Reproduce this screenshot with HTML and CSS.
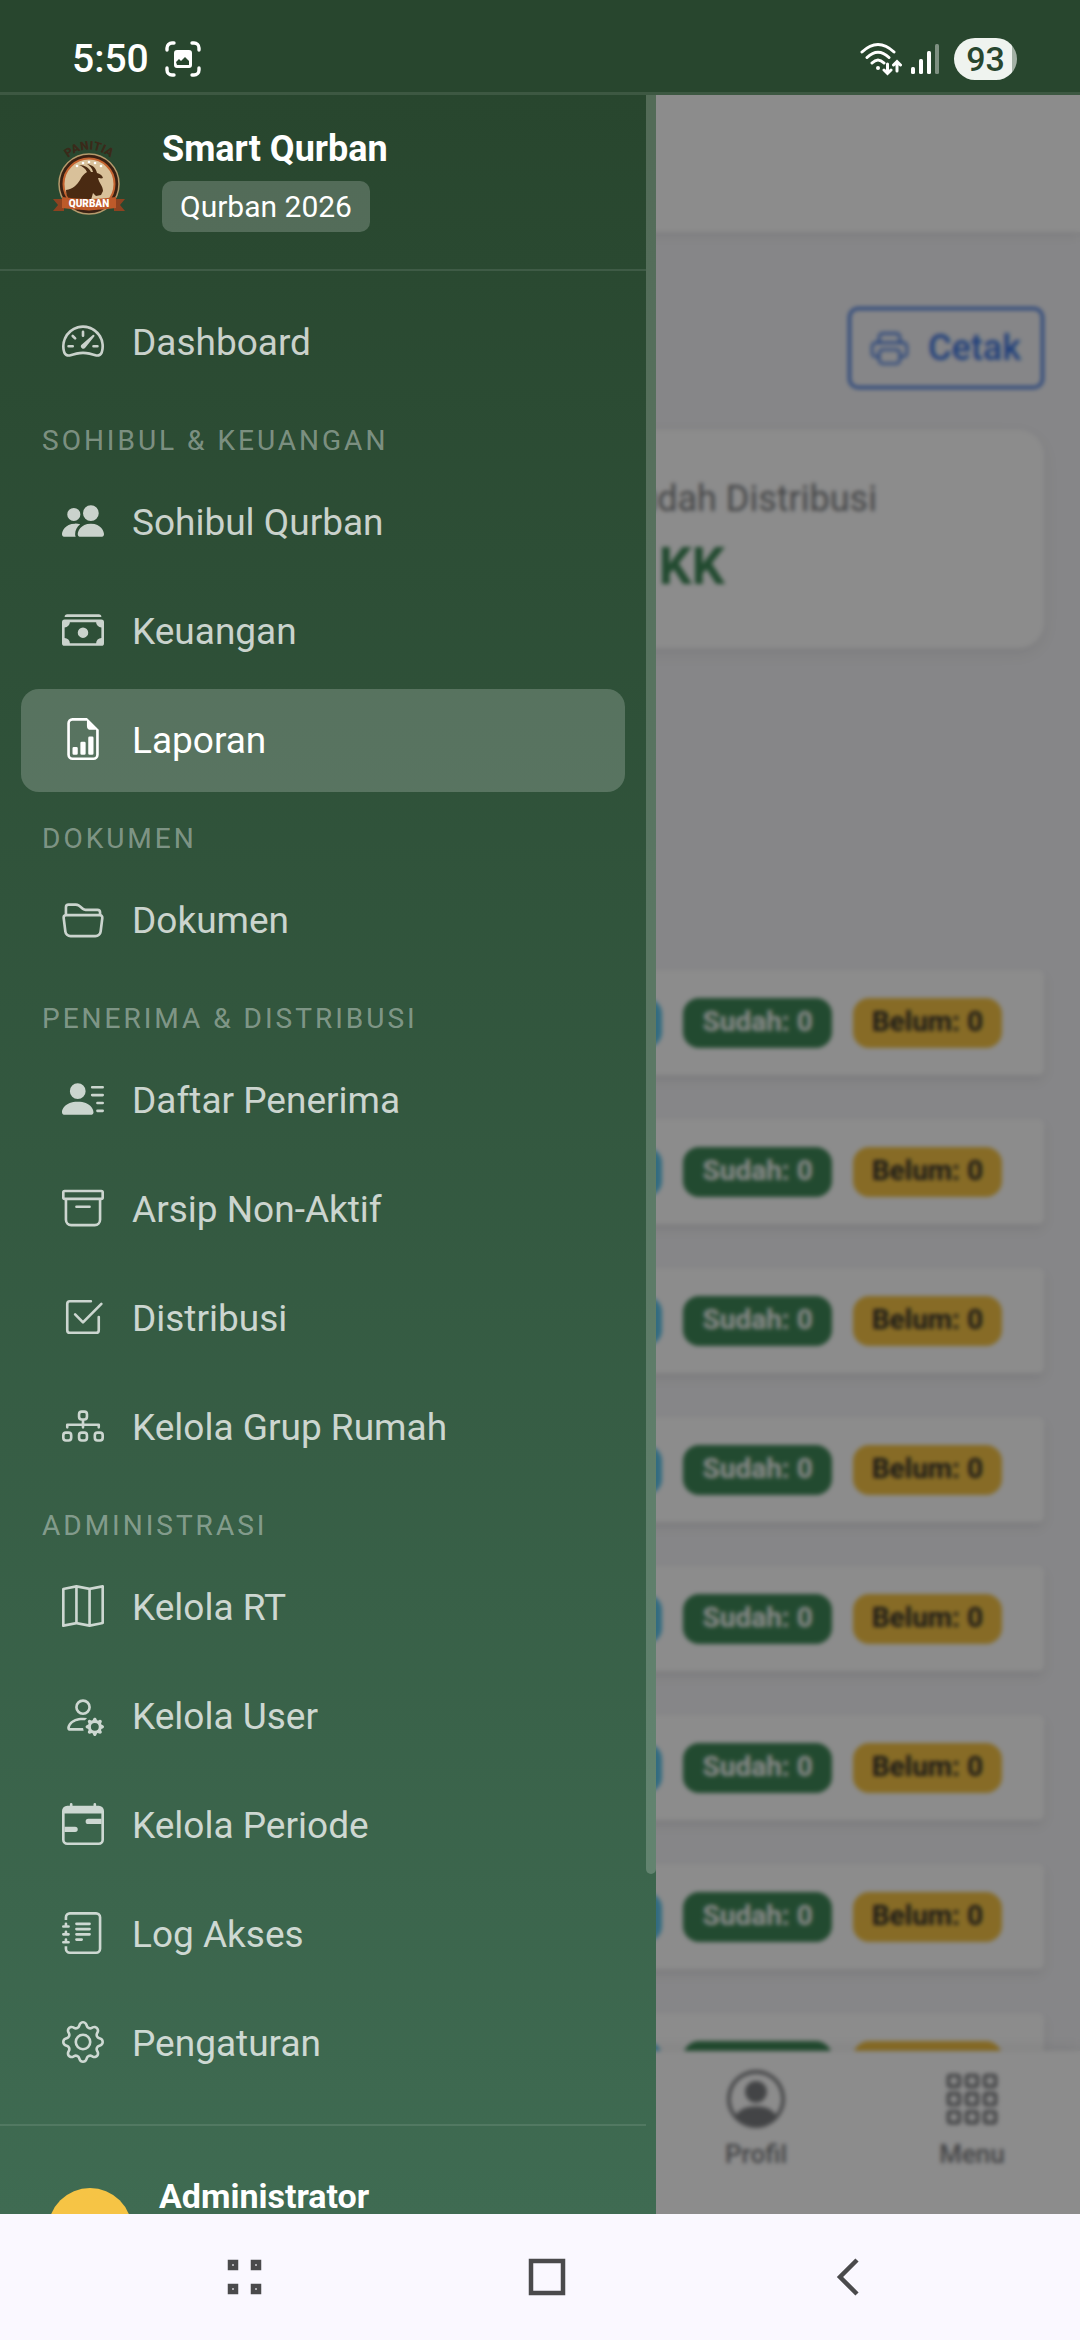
FILE: index.html
```html
<!DOCTYPE html>
<html lang="id">
<head>
    <meta charset="UTF-8">
    <meta name="viewport" content="width=device-width, initial-scale=1.0">
    <title>Smart Qurban - Laporan</title>
    <link rel="stylesheet" href="styles.css">
</head>
<body>
    <div class="status-bar">
        <div class="status-left">
            <span class="clock">5:50</span>
            <svg class="capture-icon" viewBox="0 0 36 36" fill="none" stroke="currentColor" stroke-width="3.4" stroke-linecap="round">
                <path d="M2 9V7a5 5 0 0 1 5-5h2M27 2h2a5 5 0 0 1 5 5v2M34 27v2a5 5 0 0 1-5 5h-2M9 34H7a5 5 0 0 1-5-5v-2"/>
                <path fill="currentColor" stroke="none" fill-rule="evenodd" d="M12 9h12a3 3 0 0 1 3 3v12a3 3 0 0 1-3 3H12a3 3 0 0 1-3-3V12a3 3 0 0 1 3-3zm0 15h12v-4l-4-4-4 4-2-2-3 3z"/>
            </svg>
        </div>
        <div class="status-right">
            <svg class="wifi-icon" viewBox="0 0 42 34" fill="none" stroke="currentColor" stroke-width="3" stroke-linecap="round">
                <path d="M2 10Q18-5 34 10M7 15.500Q18 5 29 15.500M12 21q6-6 12 0"/>
                <circle cx="18" cy="26" r="2" fill="currentColor" stroke="none"/>
                <path d="M27.500 22v9M24 28l3.500 3.500L31 28M37 29v-9M33.500 23l3.500-3.500 3.500 3.500"/>
            </svg>
            <svg class="signal-icon" viewBox="0 0 28 30" fill="currentColor">
                <rect x="0" y="23" width="4" height="7" rx="1.500"/>
                <rect x="8" y="15" width="4" height="15" rx="1.500"/>
                <rect x="16" y="7" width="4" height="23" rx="1.500"/>
                <rect x="24" y="0" width="4" height="30" rx="1.500" opacity=".4"/>
            </svg>
            <span class="battery">93</span>
        </div>
    </div>

    <div class="app">
        <div class="page">
            <header class="topbar"></header>
            <main class="content">
                <div class="toolbar">
                    <button class="btn-print" type="button">
                        <svg viewBox="0 0 16 16" fill="currentColor"><path d="M5 1a2 2 0 0 0-2 2v2H2a2 2 0 0 0-2 2v3a2 2 0 0 0 2 2h1v1a2 2 0 0 0 2 2h6a2 2 0 0 0 2-2v-1h1a2 2 0 0 0 2-2V7a2 2 0 0 0-2-2h-1V3a2 2 0 0 0-2-2zM4 3a1 1 0 0 1 1-1h6a1 1 0 0 1 1 1v2H4zm1 5a2 2 0 0 0-2 2v1H2a1 1 0 0 1-1-1V7a1 1 0 0 1 1-1h12a1 1 0 0 1 1 1v3a1 1 0 0 1-1 1h-1v-1a2 2 0 0 0-2-2zm7 2v3a1 1 0 0 1-1 1H5a1 1 0 0 1-1-1v-3a1 1 0 0 1 1-1h6a1 1 0 0 1 1 1"/></svg>
                        Cetak
                    </button>
                </div>
                <div class="stats">
                    <div class="stat-card">
                        <p class="stat-label">Sudah Distribusi</p>
                        <p class="stat-value">0 KK</p>
                    </div>
                </div>
                <div class="rt-list">
                    <div class="rt-row"><span class="badge badge-info"></span><span class="badge badge-success">Sudah: 0</span><span class="badge badge-warning">Belum: 0</span></div>
                    <div class="rt-row"><span class="badge badge-info"></span><span class="badge badge-success">Sudah: 0</span><span class="badge badge-warning">Belum: 0</span></div>
                    <div class="rt-row"><span class="badge badge-info"></span><span class="badge badge-success">Sudah: 0</span><span class="badge badge-warning">Belum: 0</span></div>
                    <div class="rt-row"><span class="badge badge-info"></span><span class="badge badge-success">Sudah: 0</span><span class="badge badge-warning">Belum: 0</span></div>
                    <div class="rt-row"><span class="badge badge-info"></span><span class="badge badge-success">Sudah: 0</span><span class="badge badge-warning">Belum: 0</span></div>
                    <div class="rt-row"><span class="badge badge-info"></span><span class="badge badge-success">Sudah: 0</span><span class="badge badge-warning">Belum: 0</span></div>
                    <div class="rt-row"><span class="badge badge-info"></span><span class="badge badge-success">Sudah: 0</span><span class="badge badge-warning">Belum: 0</span></div>
                    <div class="rt-row"><span class="badge badge-info"></span><span class="badge badge-success">Sudah: 0</span><span class="badge badge-warning">Belum: 0</span></div>
                </div>
            </main>
            <nav class="tabbar">
                <a class="tab tab-profile" href="#profil">
                    <svg viewBox="0 0 16 16" fill="currentColor"><path d="M11 6a3 3 0 1 1-6 0 3 3 0 0 1 6 0"/><path fill-rule="evenodd" d="M0 8a8 8 0 1 1 16 0A8 8 0 0 1 0 8m8-7a7 7 0 0 0-5.468 11.370C3.242 11.226 4.805 10 8 10s4.757 1.225 5.468 2.370A7 7 0 0 0 8 1"/></svg>
                    Profil
                </a>
                <a class="tab" href="#menu">
                    <svg viewBox="0 0 16 16" fill="none" stroke="currentColor">
                        <rect x="1.500" y="1.500" width="3" height="3" rx=".5"/><rect x="6.500" y="1.500" width="3" height="3" rx=".5"/><rect x="11.500" y="1.500" width="3" height="3" rx=".5"/>
                        <rect x="1.500" y="6.500" width="3" height="3" rx=".5"/><rect x="6.500" y="6.500" width="3" height="3" rx=".5"/><rect x="11.500" y="6.500" width="3" height="3" rx=".5"/>
                        <rect x="1.500" y="11.500" width="3" height="3" rx=".5"/><rect x="6.500" y="11.500" width="3" height="3" rx=".5"/><rect x="11.500" y="11.500" width="3" height="3" rx=".5"/>
                    </svg>
                    Menu
                </a>
            </nav>
        </div>

        <div class="overlay"></div>

        <aside class="sidebar">
            <div class="sidebar-body">
                <div class="brand">
                    <svg class="logo" viewBox="0 0 84 84">
                        <defs><path id="logo-arc" d="M17 23Q42 0 67 23"/></defs>
                        <text class="logo-top"><textPath href="#logo-arc" startOffset="50%">PANITIA</textPath></text>
                        <circle cx="42" cy="46" r="30" fill="#3a2113" stroke="#b59a6c" stroke-width="1.500"/>
                        <circle cx="42" cy="46" r="25.500" fill="#d9c19a" stroke="#c4632f" stroke-width="2"/>
                        <g fill="#fff"><circle cx="30" cy="28" r="1.300"/><circle cx="36" cy="25" r="1.300"/><circle cx="42" cy="24" r="1.300"/><circle cx="48" cy="25" r="1.300"/><circle cx="54" cy="28" r="1.300"/></g>
                        <path fill="#4a2a12" d="M19 52c7-1 11-5 14-10 2-4 4-6 7-8-2-4-5-6-8-7 6 0 10 3 12 7h2c-1-4-3-6-6-8 6 1 9 4 10 9 3 1 5 2 6 5-2 1-4 0-5 0 1 5 5 8 5 13l-2 4-5 1-3-3-2 7H23c-3-3-4-6-4-10z"/>
                        <path fill="#8e4220" d="M6 61h11v12H6l5-6zM78 61H67v12h11l-5-6z"/>
                        <path fill="#bd5a2a" d="M15 59q27 4 54 0v11q-27 4-54 0z"/>
                        <text class="logo-banner" x="42" y="69">QURBAN</text>
                    </svg>
                    <div class="brand-text">
                        <div class="brand-name">Smart Qurban</div>
                        <div class="brand-period">Qurban 2026</div>
                    </div>
                </div>

                <nav class="menu">
                    <a class="menu-item" href="#dashboard">
                        <svg viewBox="0 0 16 16"><path d="M8 4a.5.5 0 0 1 .5.5V6a.5.5 0 0 1-1 0V4.500A.5.5 0 0 1 8 4M3.732 5.732a.5.5 0 0 1 .707 0l.915.914a.5.5 0 1 1-.708.708l-.914-.915a.5.5 0 0 1 0-.707M2 10a.5.5 0 0 1 .5-.5h1.586a.5.5 0 0 1 0 1H2.500A.5.5 0 0 1 2 10m9.500 0a.5.5 0 0 1 .5-.5h1.500a.5.5 0 0 1 0 1H12a.5.5 0 0 1-.5-.5m.754-4.246a.39.39 0 0 0-.527-.02L7.547 9.310a.91.91 0 1 0 1.302 1.258l3.434-4.297a.39.39 0 0 0-.029-.518z"/><path fill-rule="evenodd" d="M0 10a8 8 0 1 1 15.547 2.661c-.442 1.253-1.845 1.602-2.932 1.250C11.309 13.488 9.475 13 8 13c-1.474 0-3.310.488-4.615.911-1.087.352-2.490.003-2.932-1.250A8 8 0 0 1 0 10m8-7a7 7 0 0 0-6.603 9.329c.203.575.923.876 1.680.63C4.397 12.533 6.358 12 8 12s3.604.532 4.923.96c.757.245 1.477-.056 1.680-.631A7 7 0 0 0 8 3"/></svg>
                        Dashboard
                    </a>

                    <h2 class="menu-heading">SOHIBUL &amp; KEUANGAN</h2>
                    <a class="menu-item" href="#sohibul">
                        <svg viewBox="0 0 16 16"><path d="M7 14s-1 0-1-1 1-4 5-4 5 3 5 4-1 1-1 1zm4-6a3 3 0 1 0 0-6 3 3 0 0 0 0 6m-5.784 6A2.240 2.240 0 0 1 5 13c0-1.355.68-2.750 1.936-3.720A6.300 6.300 0 0 0 5 9c-4 0-5 3-5 4s1 1 1 1zM4.500 8a2.500 2.500 0 1 0 0-5 2.500 2.500 0 0 0 0 5"/></svg>
                        Sohibul Qurban
                    </a>
                    <a class="menu-item" href="#keuangan">
                        <svg viewBox="0 0 16 16"><path d="M1 3a1 1 0 0 1 1-1h12a1 1 0 0 1 1 1zm7 8a2 2 0 1 0 0-4 2 2 0 0 0 0 4"/><path d="M0 5a1 1 0 0 1 1-1h14a1 1 0 0 1 1 1v8a1 1 0 0 1-1 1H1a1 1 0 0 1-1-1zm3 0a2 2 0 0 1-2 2v4a2 2 0 0 1 2 2h10a2 2 0 0 1 2-2V7a2 2 0 0 1-2-2z"/></svg>
                        Keuangan
                    </a>
                    <a class="menu-item active" href="#laporan">
                        <svg viewBox="0 0 16 16"><path d="M10 13.500a.5.5 0 0 0 .5.5h1a.5.5 0 0 0 .5-.5v-6a.5.5 0 0 0-.5-.5h-1a.5.5 0 0 0-.5.5zm-2.500.5a.5.5 0 0 1-.5-.5v-4a.5.5 0 0 1 .5-.5h1a.5.5 0 0 1 .5.5v4a.5.5 0 0 1-.5.5zm-3 0a.5.5 0 0 1-.5-.5v-2a.5.5 0 0 1 .5-.5h1a.5.5 0 0 1 .5.5v2a.5.5 0 0 1-.5.5z"/><path d="M14 14V4.500L9.500 0H4a2 2 0 0 0-2 2v12a2 2 0 0 0 2 2h8a2 2 0 0 0 2-2M9.500 3A1.500 1.500 0 0 0 11 4.500h2V14a1 1 0 0 1-1 1H4a1 1 0 0 1-1-1V2a1 1 0 0 1 1-1h5.500z"/></svg>
                        Laporan
                    </a>

                    <h2 class="menu-heading">DOKUMEN</h2>
                    <a class="menu-item" href="#dokumen">
                        <svg viewBox="0 0 16 16"><path d="M1 3.500A1.500 1.500 0 0 1 2.500 2h2.764c.958 0 1.760.56 2.311 1.184C7.985 3.648 8.480 4 9 4h4.500A1.500 1.500 0 0 1 15 5.500v.64c.57.265.94.876.856 1.546l-.64 5.124A2.500 2.500 0 0 1 12.733 15H3.266a2.500 2.500 0 0 1-2.481-2.190l-.64-5.124A1.500 1.500 0 0 1 1 6.140zM2 6h12v-.5a.5.5 0 0 0-.5-.5H9c-.964 0-1.710-.629-2.174-1.154C6.374 3.334 5.820 3 5.264 3H2.500a.5.5 0 0 0-.5.5zm-.367 1a.5.5 0 0 0-.496.562l.64 5.124A1.500 1.500 0 0 0 3.266 14h9.468a1.500 1.500 0 0 0 1.489-1.314l.64-5.124A.5.5 0 0 0 14.367 7z"/></svg>
                        Dokumen
                    </a>

                    <h2 class="menu-heading">PENERIMA &amp; DISTRIBUSI</h2>
                    <a class="menu-item" href="#penerima">
                        <svg viewBox="0 0 16 16"><path d="M6 8a3 3 0 1 0 0-6 3 3 0 0 0 0 6m-5 6s-1 0-1-1 1-4 6-4 6 3 6 4-1 1-1 1zM11 3.500a.5.5 0 0 1 .5-.5h4a.5.5 0 0 1 0 1h-4a.5.5 0 0 1-.5-.5m.5 2.500a.5.5 0 0 0 0 1h4a.5.5 0 0 0 0-1zm2 3a.5.5 0 0 0 0 1h2a.5.5 0 0 0 0-1zm0 3a.5.5 0 0 0 0 1h2a.5.5 0 0 0 0-1z"/></svg>
                        Daftar Penerima
                    </a>
                    <a class="menu-item" href="#arsip">
                        <svg viewBox="0 0 16 16"><path d="M0 2a1 1 0 0 1 1-1h14a1 1 0 0 1 1 1v2a1 1 0 0 1-1 1v7.500a2.500 2.500 0 0 1-2.500 2.500h-9A2.500 2.500 0 0 1 1 12.500V5a1 1 0 0 1-1-1zm2 3v7.500A1.500 1.500 0 0 0 3.500 14h9a1.500 1.500 0 0 0 1.500-1.500V5zm13-3H1v2h14zM5 7.500a.5.5 0 0 1 .5-.5h5a.5.5 0 0 1 0 1h-5a.5.5 0 0 1-.5-.5"/></svg>
                        Arsip Non-Aktif
                    </a>
                    <a class="menu-item" href="#distribusi">
                        <svg viewBox="0 0 16 16"><path d="M3 14.500A1.500 1.500 0 0 1 1.500 13V3A1.500 1.500 0 0 1 3 1.500h8a.5.5 0 0 1 0 1H3a.5.5 0 0 0-.5.5v10a.5.5 0 0 0 .5.5h10a.5.5 0 0 0 .5-.5V8a.5.5 0 0 1 1 0v5a1.500 1.500 0 0 1-1.500 1.500z"/><path d="m8.354 10.354 7-7a.5.5 0 0 0-.708-.708L8 9.293 5.354 6.646a.5.5 0 1 0-.708.708l3 3a.5.5 0 0 0 .708 0"/></svg>
                        Distribusi
                    </a>
                    <a class="menu-item" href="#grup-rumah">
                        <svg viewBox="0 0 16 16"><path fill-rule="evenodd" d="M6 3.500A1.500 1.500 0 0 1 7.500 2h1A1.500 1.500 0 0 1 10 3.500v1A1.500 1.500 0 0 1 8.500 6v1H14a.5.5 0 0 1 .5.5v1a.5.5 0 0 1-1 0V8h-5v.5a.5.5 0 0 1-1 0V8h-5v.5a.5.5 0 0 1-1 0v-1A.5.5 0 0 1 2 7h5.500V6A1.500 1.500 0 0 1 6 4.500zM8.500 5a.5.5 0 0 0 .5-.5v-1a.5.5 0 0 0-.5-.5h-1a.5.5 0 0 0-.5.5v1a.5.5 0 0 0 .5.5zM0 11.500A1.500 1.500 0 0 1 1.500 10h1A1.500 1.500 0 0 1 4 11.500v1A1.500 1.500 0 0 1 2.500 14h-1A1.500 1.500 0 0 1 0 12.500zm1.500-.5a.5.5 0 0 0-.5.5v1a.5.5 0 0 0 .5.5h1a.5.5 0 0 0 .5-.5v-1a.5.5 0 0 0-.5-.5zm4.500.5A1.500 1.500 0 0 1 7.500 10h1a1.500 1.500 0 0 1 1.500 1.500v1A1.500 1.500 0 0 1 8.500 14h-1A1.500 1.500 0 0 1 6 12.500zm1.500-.5a.5.5 0 0 0-.5.5v1a.5.5 0 0 0 .5.5h1a.5.5 0 0 0 .5-.5v-1a.5.5 0 0 0-.5-.5zm4.500.5a1.500 1.500 0 0 1 1.500-1.500h1a1.500 1.500 0 0 1 1.500 1.500v1a1.500 1.500 0 0 1-1.500 1.500h-1a1.500 1.500 0 0 1-1.500-1.500zm1.500-.5a.5.5 0 0 0-.5.5v1a.5.5 0 0 0 .5.5h1a.5.5 0 0 0 .5-.5v-1a.5.5 0 0 0-.5-.5z"/></svg>
                        Kelola Grup Rumah
                    </a>

                    <h2 class="menu-heading">ADMINISTRASI</h2>
                    <a class="menu-item" href="#rt">
                        <svg viewBox="0 0 16 16"><path fill-rule="evenodd" d="M15.817.113A.5.5 0 0 1 16 .5v14a.5.5 0 0 1-.402.49l-5 1a.5.5 0 0 1-.196 0L5.500 15.010l-4.902.98A.5.5 0 0 1 0 15.500v-14a.5.5 0 0 1 .402-.49l5-1a.5.5 0 0 1 .196 0L10.500.99l4.902-.98a.5.5 0 0 1 .415.103M10 1.910l-4-.8v12.980l4 .8zm1 12.980 4-.8V1.110l-4 .8zm-6-.8V1.110l-4 .8v12.980z"/></svg>
                        Kelola RT
                    </a>
                    <a class="menu-item" href="#user">
                        <svg viewBox="0 0 16 16"><path d="M11 5a3 3 0 1 1-6 0 3 3 0 0 1 6 0M8 7a2 2 0 1 0 0-4 2 2 0 0 0 0 4m.256 7a4.500 4.500 0 0 1-.229-1.004H3c.001-.246.154-.986.832-1.664C4.484 10.680 5.711 10 8 10q.39 0 .74.025c.226-.341.496-.65.804-.918Q8.844 9.002 8 9c-5 0-6 3-6 4s1 1 1 1zm3.630-4.540c.18-.613 1.048-.613 1.229 0l.043.148a.64.64 0 0 0 .921.382l.136-.074c.561-.306 1.175.308.87.869l-.075.136a.64.64 0 0 0 .382.92l.149.045c.612.18.612 1.048 0 1.229l-.15.043a.64.64 0 0 0-.38.921l.074.136c.305.561-.309 1.175-.87.87l-.136-.075a.64.64 0 0 0-.92.382l-.045.149c-.18.612-1.048.612-1.229 0l-.043-.15a.64.64 0 0 0-.921-.38l-.136.074c-.561.305-1.175-.309-.87-.87l.075-.136a.64.64 0 0 0-.382-.92l-.148-.045c-.613-.18-.613-1.048 0-1.229l.148-.043a.64.64 0 0 0 .382-.921l-.074-.136c-.306-.561.308-1.175.869-.87l.136.075a.64.64 0 0 0 .92-.382zM14 12.500a1.500 1.500 0 1 0-3 0 1.500 1.500 0 0 0 3 0"/></svg>
                        Kelola User
                    </a>
                    <a class="menu-item" href="#periode">
                        <svg viewBox="0 0 16 16"><path d="M9 7a1 1 0 0 1 1-1h5v2h-5a1 1 0 0 1-1-1M1 9h4a1 1 0 0 1 0 2H1z"/><path d="M3.500 0a.5.5 0 0 1 .5.5V1h8V.5a.5.5 0 0 1 1 0V1h1a2 2 0 0 1 2 2v11a2 2 0 0 1-2 2H2a2 2 0 0 1-2-2V3a2 2 0 0 1 2-2h1V.5a.5.5 0 0 1 .5-.5M1 4v10a1 1 0 0 0 1 1h12a1 1 0 0 0 1-1V4z"/></svg>
                        Kelola Periode
                    </a>
                    <a class="menu-item" href="#log">
                        <svg viewBox="0 0 16 16"><path d="M5 10.500a.5.5 0 0 1 .5-.5h2a.5.5 0 0 1 0 1h-2a.5.5 0 0 1-.5-.5m0-2a.5.5 0 0 1 .5-.5h5a.5.5 0 0 1 0 1h-5a.5.5 0 0 1-.5-.5m0-2a.5.5 0 0 1 .5-.5h5a.5.5 0 0 1 0 1h-5a.5.5 0 0 1-.5-.5m0-2a.5.5 0 0 1 .5-.5h5a.5.5 0 0 1 0 1h-5a.5.5 0 0 1-.5-.5"/><path d="M3 0h10a2 2 0 0 1 2 2v12a2 2 0 0 1-2 2H3a2 2 0 0 1-2-2v-1h1v1a1 1 0 0 0 1 1h10a1 1 0 0 0 1-1V2a1 1 0 0 0-1-1H3a1 1 0 0 0-1 1v1H1V2a2 2 0 0 1 2-2"/><path d="M1 5v-.5a.5.5 0 0 1 1 0V5h.5a.5.5 0 0 1 0 1h-2a.5.5 0 0 1 0-1zm0 3v-.5a.5.5 0 0 1 1 0V8h.5a.5.5 0 0 1 0 1h-2a.5.5 0 0 1 0-1zm0 3v-.5a.5.5 0 0 1 1 0v.5h.5a.5.5 0 0 1 0 1h-2a.5.5 0 0 1 0-1z"/></svg>
                        Log Akses
                    </a>
                    <a class="menu-item" href="#pengaturan">
                        <svg viewBox="0 0 16 16"><path d="M8 4.754a3.246 3.246 0 1 0 0 6.492 3.246 3.246 0 0 0 0-6.492M5.754 8a2.246 2.246 0 1 1 4.492 0 2.246 2.246 0 0 1-4.492 0"/><path d="M9.796 1.343c-.527-1.790-3.065-1.790-3.592 0l-.094.319a.873.873 0 0 1-1.255.52l-.292-.16c-1.640-.892-3.433.902-2.540 2.541l.159.292a.873.873 0 0 1-.52 1.255l-.319.094c-1.790.527-1.790 3.065 0 3.592l.319.094a.873.873 0 0 1 .52 1.255l-.16.292c-.892 1.640.901 3.434 2.541 2.540l.292-.159a.873.873 0 0 1 1.255.52l.094.319c.527 1.790 3.065 1.790 3.592 0l.094-.319a.873.873 0 0 1 1.255-.52l.292.16c1.640.893 3.434-.902 2.540-2.541l-.159-.292a.873.873 0 0 1 .52-1.255l.319-.094c1.790-.527 1.790-3.065 0-3.592l-.319-.094a.873.873 0 0 1-.52-1.255l.16-.292c.893-1.640-.902-3.433-2.541-2.540l-.292.159a.873.873 0 0 1-1.255-.52zm-2.633.283c.246-.835 1.428-.835 1.674 0l.094.319a1.873 1.873 0 0 0 2.693 1.115l.291-.16c.764-.415 1.600.42 1.184 1.185l-.159.292a1.873 1.873 0 0 0 1.116 2.692l.318.094c.835.246.835 1.428 0 1.674l-.319.094a1.873 1.873 0 0 0-1.115 2.693l.16.291c.415.764-.42 1.600-1.185 1.184l-.291-.159a1.873 1.873 0 0 0-2.693 1.116l-.094.318c-.246.835-1.428.835-1.674 0l-.094-.319a1.873 1.873 0 0 0-2.692-1.115l-.292.16c-.764.415-1.600-.42-1.184-1.185l.159-.291A1.873 1.873 0 0 0 1.945 8.930l-.319-.094c-.835-.246-.835-1.428 0-1.674l.319-.094A1.873 1.873 0 0 0 3.060 4.377l-.16-.292c-.415-.764.42-1.600 1.185-1.184l.292.159a1.873 1.873 0 0 0 2.692-1.115z"/></svg>
                        Pengaturan
                    </a>
                </nav>

                <div class="account">
                    <div class="avatar"></div>
                    <div class="account-name">Administrator</div>
                </div>
            </div>
            <div class="scroll-thumb"></div>
        </aside>
    </div>

    <div class="system-nav">
        <button type="button" aria-label="Recent apps">
            <svg viewBox="0 0 40 40" fill="none" stroke="currentColor" stroke-width="4.500">
                <rect x="5" y="5" width="6" height="6"/><rect x="28" y="5" width="6" height="6"/>
                <rect x="5" y="29" width="6" height="6"/><rect x="28" y="29" width="6" height="6"/>
            </svg>
        </button>
        <button type="button" aria-label="Home">
            <svg viewBox="0 0 40 40" fill="none" stroke="currentColor" stroke-width="4.500"><rect x="4" y="4" width="32" height="32"/></svg>
        </button>
        <button type="button" aria-label="Back">
            <svg viewBox="0 0 40 40" fill="none" stroke="currentColor" stroke-width="4.500"><path d="M28 3 11 20l17 17"/></svg>
        </button>
    </div>
</body>
</html>
```
FILE: styles.css
```css
:root {
    --green-dark: #28462e;
    --green-light: #3f6b52;
    --line: rgba(255, 255, 255, 0.1);
    --page-bg: #f4f4f7;
    --white: #ffffff;
    --blue: #3b74e0;
    --success: #3f8858;
    --warning: #f6c445;
    --info: #5cc4ea;
    --muted: #7b7d80;
}

* {
    box-sizing: border-box;
}

body {
    margin: 0;
    height: 100vh;
    display: flex;
    flex-direction: column;
    overflow: hidden;
    font-family: Roboto, sans-serif;
    font-size: 37px;
}

a {
    text-decoration: none;
}

/* Status bar */
.status-bar {
    display: flex;
    justify-content: space-between;
    align-items: center;
    height: 95px;
    padding: 26px 63px 0 72px;
    background: var(--green-dark);
    border-bottom: 3px solid #3d5842;
    color: var(--white);
}

.status-left,
.status-right {
    display: flex;
    align-items: center;
}

.status-left {
    gap: 16px;
}

.clock {
    font-size: 39px;
    font-weight: 500;
}

.capture-icon {
    width: 36px;
    height: 36px;
}

.wifi-icon {
    width: 42px;
    height: 34px;
    margin-right: 9px;
}

.signal-icon {
    width: 28px;
    height: 30px;
    margin-right: 15px;
}

.battery {
    width: 63px;
    border-radius: 21px;
    background: linear-gradient(90deg, #eff3ef 92%, #a3b1a5 92%);
    color: var(--green-dark);
    font-size: 34px;
    font-weight: 500;
    line-height: 42px;
    text-align: center;
}

.app {
    position: relative;
    flex: 1;
    min-height: 0;
    overflow: hidden;
}

/* Report page */
.page {
    display: flex;
    flex-direction: column;
    height: 100%;
    background: var(--page-bg);
}

.topbar {
    flex: none;
    height: 137px;
    background: var(--white);
    box-shadow: 0 3px 10px rgba(0, 0, 0, 0.08);
}

.content {
    flex: 1;
    min-height: 0;
    overflow: hidden;
    padding: 75px 36px 0;
}

.toolbar {
    display: flex;
    justify-content: flex-end;
    margin-bottom: 41px;
}

.btn-print {
    display: flex;
    align-items: center;
    gap: 20px;
    height: 82px;
    padding: 0 20px;
    background: none;
    border: 3px solid var(--blue);
    border-radius: 10px;
    color: var(--blue);
    font-family: inherit;
    font-size: 36px;
    font-weight: 500;
}

.btn-print svg {
    width: 37px;
    height: 37px;
}

.stats {
    display: grid;
    grid-template-columns: 1fr 1fr;
    gap: 32px;
    margin-bottom: 322px;
}

.stat-card {
    grid-column: 2;
    height: 218px;
    padding: 42px 60px;
    background: var(--white);
    border-radius: 26px;
    box-shadow: 0 5px 16px rgba(0, 0, 0, 0.07);
}

.stat-label,
.stat-value {
    margin: 0;
}

.stat-label {
    color: var(--muted);
    font-size: 36px;
    line-height: 54px;
}

.stat-value {
    color: var(--success);
    font-size: 52px;
    font-weight: 700;
    line-height: 82px;
}

.rt-list {
    display: flex;
    flex-direction: column;
    gap: 44px;
}

.rt-row {
    flex: none;
    display: flex;
    justify-content: flex-end;
    align-items: center;
    gap: 21px;
    height: 105px;
    padding-right: 42px;
    background: var(--white);
    border-radius: 6px;
    box-shadow: 0 5px 12px rgba(0, 0, 0, 0.08);
}

.badge {
    height: 50px;
    padding: 0 19px;
    border-radius: 16px;
    font-size: 28px;
    font-weight: 700;
    line-height: 48px;
}

.badge-info {
    width: 120px;
    background: var(--info);
}

.badge-success {
    background: var(--success);
    color: var(--white);
}

.badge-warning {
    background: var(--warning);
    color: #33302a;
}

.tabbar {
    flex: none;
    display: grid;
    grid-template-columns: repeat(5, 1fr);
    height: 163px;
    padding-top: 19px;
    background: var(--white);
    box-shadow: 0 -3px 12px rgba(0, 0, 0, 0.08);
}

.tab {
    display: flex;
    flex-direction: column;
    align-items: center;
    gap: 10px;
    color: var(--muted);
    font-size: 26px;
    font-weight: 500;
    line-height: 32px;
}

.tab-profile {
    grid-column: 4;
}

.tab svg {
    width: 58px;
    height: 58px;
}

.overlay {
    position: absolute;
    inset: 0;
    background: rgba(0, 0, 0, 0.45);
    backdrop-filter: blur(2px);
}

/* Sidebar */
.sidebar {
    position: absolute;
    top: 0;
    bottom: 0;
    left: 0;
    width: 656px;
    overflow: hidden;
    background: linear-gradient(180deg, var(--green-dark) 0%, var(--green-light) 100%);
}

.sidebar-body {
    margin-right: 10px;
}

.scroll-thumb {
    position: absolute;
    top: 0;
    right: 0;
    width: 10px;
    height: 1779px;
    border-radius: 0 0 5px 5px;
    background: rgba(255, 255, 255, 0.2);
}

.brand {
    display: flex;
    align-items: center;
    gap: 31px;
    padding: 32px 47px 37px;
    border-bottom: 2px solid var(--line);
}

.logo {
    width: 84px;
    height: 84px;
}

.logo-top {
    fill: #3a2a1a;
    font-size: 12px;
    font-weight: 900;
    text-anchor: middle;
}

.logo-banner {
    fill: #ffffff;
    font-size: 10px;
    font-weight: 900;
    text-anchor: middle;
}

.brand-name,
.account-name {
    color: var(--white);
    font-size: 36px;
    font-weight: 700;
    line-height: 44px;
}

.brand-period {
    display: inline-block;
    margin-top: 10px;
    padding: 0 18px;
    border-radius: 10px;
    background: rgba(255, 255, 255, 0.2);
    color: var(--white);
    font-size: 30px;
    line-height: 51px;
}

.menu {
    padding: 20px 21px 0;
}

.menu-item {
    display: flex;
    align-items: center;
    gap: 28px;
    height: 103px;
    margin-bottom: 6px;
    padding: 0 41px;
    border-radius: 18px;
    color: rgba(255, 255, 255, 0.75);
}

.menu-item svg {
    width: 42px;
    height: 42px;
    margin-bottom: 4px;
    fill: currentColor;
}

.menu-item.active {
    background: rgba(255, 255, 255, 0.2);
    color: var(--white);
}

.menu-heading {
    margin: 0;
    padding: 20px 21px 9px;
    color: rgba(255, 255, 255, 0.4);
    font-size: 28px;
    font-weight: 400;
    letter-spacing: 3px;
    line-height: 42px;
}

.account {
    display: flex;
    align-items: center;
    gap: 27px;
    margin-top: 29px;
    padding: 48px;
    border-top: 2px solid var(--line);
}

.avatar {
    width: 84px;
    height: 84px;
    margin-top: 14px;
    border-radius: 50%;
    background: var(--warning);
}

.account-name {
    align-self: flex-start;
    font-size: 34px;
}

/* Android navigation */
.system-nav {
    flex: none;
    display: flex;
    justify-content: space-around;
    align-items: center;
    height: 126px;
    padding: 0 80px 0 94px;
    background: #faf8ff;
}

.system-nav button {
    display: flex;
    padding: 0;
    background: none;
    border: none;
    color: #4a4a4c;
}

.system-nav svg {
    width: 40px;
    height: 40px;
}
```
